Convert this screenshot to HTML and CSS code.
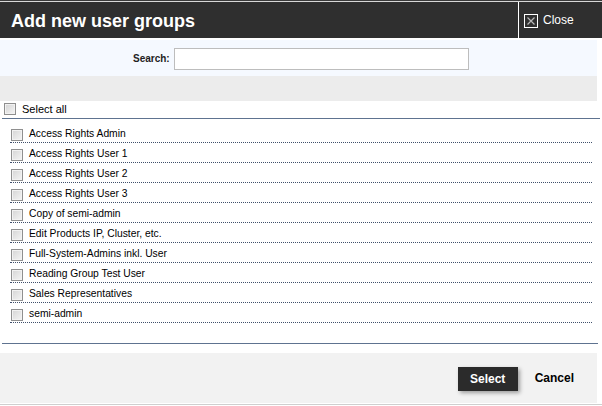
FILE: index.html
```html
<!DOCTYPE html>
<html>
<head>
<meta charset="utf-8">
<link rel="stylesheet" href="styles.css">
</head>
<body>
<div class="dialog">
  <div class="topline"></div>
  <div class="header">
    <h1 class="title">Add new user groups</h1>
    <div class="close">
      <span class="close-icon"><svg width="14" height="14" viewBox="0 0 14 14"><rect x="0.5" y="0.5" width="13" height="13" fill="none" stroke="#ffffff" stroke-width="1"/><path d="M3.5 3.5 L10.5 10.5 M10.5 3.5 L3.5 10.5" stroke="#b8b8b8" stroke-width="1.2"/></svg></span>
      <span class="close-text">Close</span>
    </div>
  </div>
  <div class="panel">
    <div class="search">
      <label class="search-label">Search:</label>
      <input class="search-input" type="text">
    </div>
    <div class="graybar"></div>
    <div class="selectall">
      <span class="cb"></span><span class="selectall-text">Select all</span>
    </div>
    <ul class="list">
      <li class="item"><span class="cb"></span><span class="label">Access Rights Admin</span></li>
      <li class="item"><span class="cb"></span><span class="label">Access Rights User 1</span></li>
      <li class="item"><span class="cb"></span><span class="label">Access Rights User 2</span></li>
      <li class="item"><span class="cb"></span><span class="label">Access Rights User 3</span></li>
      <li class="item"><span class="cb"></span><span class="label">Copy of semi-admin</span></li>
      <li class="item"><span class="cb"></span><span class="label">Edit Products IP, Cluster, etc.</span></li>
      <li class="item"><span class="cb"></span><span class="label">Full-System-Admins inkl. User</span></li>
      <li class="item"><span class="cb"></span><span class="label">Reading Group Test User</span></li>
      <li class="item"><span class="cb"></span><span class="label">Sales Representatives</span></li>
      <li class="item"><span class="cb"></span><span class="label">semi-admin</span></li>
    </ul>
    <div class="bottomline"></div>
    <div class="footer">
      <button class="btn-select">Select</button>
      <button class="btn-cancel">Cancel</button>
    </div>
    <div class="footline"></div>
  </div>
</div>
</body>
</html>
```
FILE: styles.css
```css
html, body {
  margin: 0;
  padding: 0;
  background: #ffffff;
  font-family: "Liberation Sans", Arial, sans-serif;
}
.dialog {
  width: 602px;
  height: 406px;
  overflow: hidden;
}
.topline {
  height: 1px;
  background: #3a3a3a;
  border-bottom: 1px solid #d8d8d8;
}
.header {
  height: 36px;
  background: #2f2f2f;
  display: flex;
  align-items: stretch;
}
.title {
  flex: 1;
  margin: 0;
  padding-left: 11px;
  font-size: 18px;
  font-weight: bold;
  color: #ffffff;
  line-height: 38px;
}
.close {
  width: 78px;
  border-left: 1px solid #ffffff;
  padding-left: 5px;
  display: flex;
  align-items: center;
  gap: 5px;
}
.close-icon {
  display: block;
  width: 14px;
  height: 14px;
  margin-top: 1px;
}
.close-icon svg {
  display: block;
}
.close-text {
  color: #ffffff;
  font-size: 12px;
}
.panel {
  width: 597px;
  padding-top: 2px;
}
.search {
  height: 36px;
  background: #f5f9ff;
  display: flex;
  align-items: center;
  padding-left: 133px;
  box-sizing: border-box;
}
.search-label {
  font-size: 10px;
  font-weight: bold;
  color: #222;
  margin-right: 4px;
}
.search-input {
  width: 295px;
  height: 22px;
  box-sizing: border-box;
  border: 1px solid #bdbdbd;
  background: #ffffff;
  margin: 0;
  padding: 0;
  margin-top: 2px;
}
.graybar {
  height: 25px;
  background: #ececec;
}
.cb {
  display: inline-block;
  width: 12px;
  height: 12px;
  box-sizing: border-box;
  border: 1px solid #8f8f8f;
  background: linear-gradient(135deg, #d4d4d4 0%, #e8e8e8 60%, #f4f4f4 100%);
  box-shadow: inset 0 0 0 1px #f2f2f2;
  flex: none;
}
.selectall {
  width: 596px;
  height: 15px;
  margin-left: 2px;
  border-bottom: 1px solid #5e7390;
  display: flex;
  align-items: flex-start;
  padding-left: 2px;
  padding-top: 2px;
  box-sizing: content-box;
}
.selectall-text {
  font-size: 11px;
  line-height: 12px;
  color: #000;
  margin-left: 6px;
}
.list {
  list-style: none;
  margin: 0;
  padding: 4px 0 0 0;
}
.item {
  margin-left: 10px;
  width: 581px;
  height: 19px;
  border-bottom: 1px dotted #3f4f6a;
  display: flex;
  align-items: flex-end;
  padding-left: 1px;
  box-sizing: content-box;
}
.item .cb {
  margin-bottom: 1px;
}
.item .label {
  font-size: 10.3px;
  color: #000;
  margin-left: 6px;
  line-height: 14px;
  margin-bottom: 1px;
}
.bottomline {
  margin-top: 20px;
  margin-left: 2px;
  width: 596px;
  height: 1px;
  background: #5e7390;
}
.footer {
  margin-top: 9px;
  height: 50px;
  background: #f2f2f2;
  display: flex;
  align-items: center;
  justify-content: flex-end;
  padding-right: 23px;
  box-sizing: border-box;
}
.btn-select {
  width: 60px;
  height: 24px;
  background: #2b2b2b;
  color: #ffffff;
  border: none;
  font-family: "Liberation Sans", Arial, sans-serif;
  font-size: 12px;
  font-weight: bold;
  box-shadow: 2px 2px 4px rgba(0,0,0,0.35);
  margin-top: 1px;
  padding: 0;
}
.btn-cancel {
  background: none;
  border: none;
  font-family: "Liberation Sans", Arial, sans-serif;
  font-size: 12px;
  font-weight: bold;
  color: #000;
  margin-left: 17px;
  padding: 0;
}
.footline {
  margin-top: 1px;
  width: 602px;
  height: 1px;
  background: #cfcfcf;
}
```
